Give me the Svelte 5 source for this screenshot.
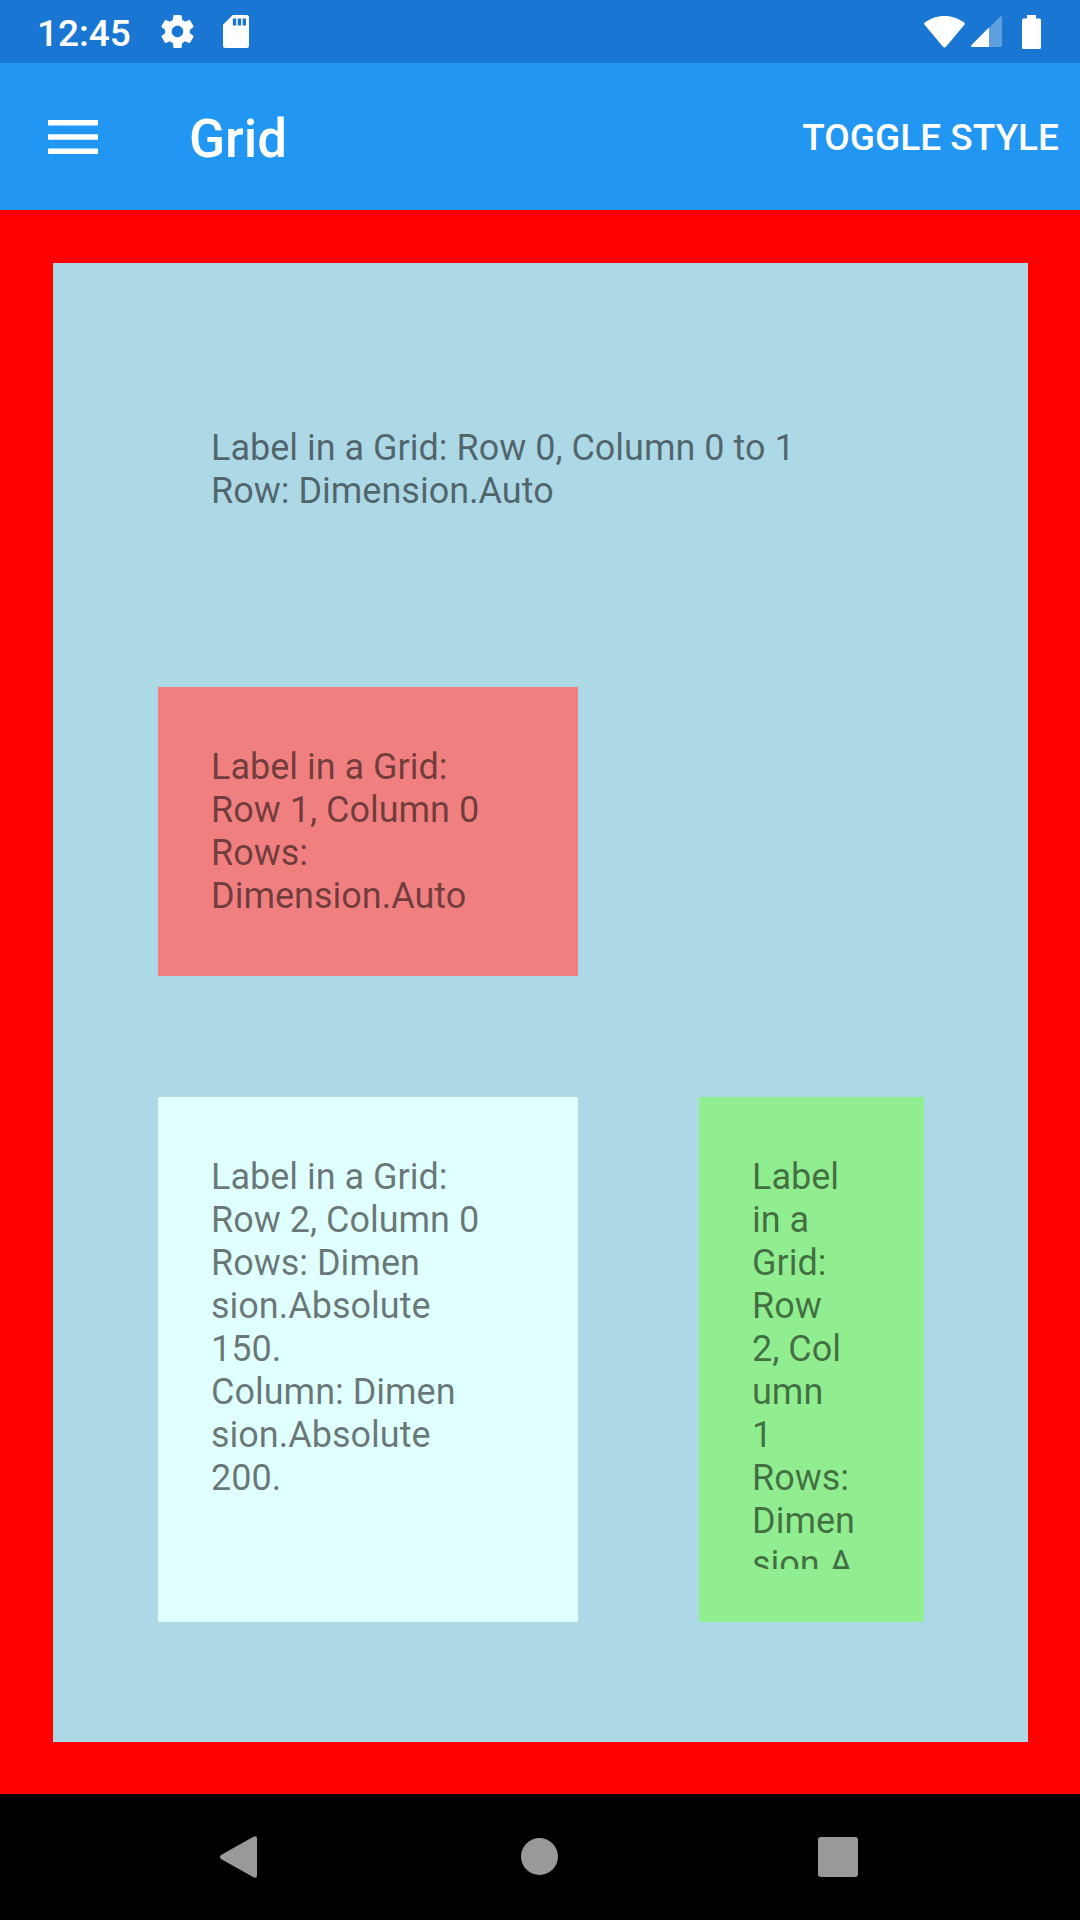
<script>
  let styled = $state(true);
</script>

<div class="screen">
  <div class="status">
    <time class="clock">12:45</time>
    <svg class="gear" viewBox="2 2 20 20" aria-hidden="true">
      <path d="M19.43 12.98c.04-.32.07-.64.07-.98s-.03-.66-.07-.98l2.11-1.65c.19-.15.24-.42.12-.64l-2-3.46c-.12-.22-.39-.3-.61-.22l-2.49 1c-.52-.4-1.08-.73-1.69-.98l-.38-2.65C14.46 2.18 14.25 2 14 2h-4c-.25 0-.46.18-.49.42l-.38 2.65c-.61.25-1.17.59-1.69.98l-2.49-1c-.23-.09-.49 0-.61.22l-2 3.46c-.13.22-.07.49.12.64l2.11 1.65c-.04.32-.07.65-.07.98s.03.66.07.98l-2.11 1.65c-.19.15-.24.42-.12.64l2 3.46c.12.22.39.3.61.22l2.49-1c.52.4 1.08.73 1.69.98l.38 2.65c.03.24.24.42.49.42h4c.25 0 .46-.18.49-.42l.38-2.65c.61-.25 1.17-.59 1.69-.98l2.49 1c.23.09.49 0 .61-.22l2-3.46c.12-.22.07-.49-.12-.64l-2.11-1.65zM12 15.5c-1.93 0-3.5-1.57-3.5-3.5s1.57-3.5 3.5-3.5 3.5 1.57 3.5 3.5-1.57 3.5-3.5 3.5z" />
    </svg>
    <svg class="card-icon" viewBox="0 0 26 33" aria-hidden="true">
      <path fill-rule="evenodd" d="M9.8 0H23.5a2.5 2.5 0 0 1 2.5 2.5V30.5a2.5 2.5 0 0 1-2.5 2.5H2.5A2.5 2.5 0 0 1 0 30.5V9.8ZM9.8 3.5v7h3.4v-7zm4.9 0v7h3.4v-7zm4.9 0v7h3.4v-7z" />
    </svg>
    <div class="signals">
      <svg class="wifi" viewBox="0 0 41 32" aria-hidden="true">
        <path d="M.6 8.7C-.1 7.9 0 7.2.8 6.6 6 2.6 13 0 20.5 0S35 2.6 40.2 6.6c.8.6.9 1.3.2 2.1L22 30.7c-.9 1.1-2.1 1.1-3 0Z" />
      </svg>
      <svg class="cell" viewBox="0 0 31 31" aria-hidden="true">
        <path opacity=".3" d="M18 12 29.3.6Q31-.5 31 1.5V29.5Q31 31 29.5 31H18Z" />
        <path d="M18 11.5V31H1.2Q-.7 30.8.5 29Z" />
      </svg>
      <svg class="battery" viewBox="0 0 19 34" aria-hidden="true">
        <path d="M5 0h9v3.5h3.5Q19 3.5 19 5v27.5Q19 34 17.5 34h-16Q0 34 0 32.5V5Q0 3.5 1.5 3.5H5Z" />
      </svg>
    </div>
  </div>

  <header class="bar">
    <button class="menu" type="button" aria-label="Open menu">
      <svg viewBox="0 0 50 34" aria-hidden="true">
        <path d="M0 0h50v5.6H0zM0 14.2h50v5.6H0zM0 28.4h50V34H0z" />
      </svg>
    </button>
    <h1>Grid</h1>
    <button class="toggle" type="button" onclick={() => (styled = !styled)}>TOGGLE STYLE</button>
  </header>

  <main class:styled>
    <div class="panel">
      <section class="cell-box wide"><p>Label in a Grid: Row 0, Column 0 to 1<br />Row: Dimension.Auto</p></section>
      <section class="cell-box coral"><p>Label in a Grid:<br />Row 1, Column 0<br />Rows:<br />Dimension.Auto</p></section>
      <section class="cell-box cyan"><p>Label in a Grid:<br />Row 2, Column 0<br />Rows: Dimen<br />sion.Absolute<br />150.<br />Column: Dimen<br />sion.Absolute<br />200.</p></section>
      <section class="cell-box green"><p>Label<br />in a<br />Grid:<br />Row<br />2, Col<br />umn<br />1<br />Rows:<br />Dimen<br />sion.A</p></section>
    </div>
  </main>

  <nav aria-label="System">
    <button type="button" aria-label="Back">
      <svg viewBox="0 0 48 48" aria-hidden="true">
        <path d="M5 22 37.5 3.7Q41 2 41 5.5V42.5Q41 46 37.5 44.3L5 26Q3 24 5 22Z" />
      </svg>
    </button>
    <button type="button" aria-label="Home">
      <svg viewBox="0 0 48 48" aria-hidden="true"><circle cx="23.5" cy="23.5" r="18.5" /></svg>
    </button>
    <button type="button" aria-label="Recent apps">
      <svg viewBox="0 0 48 48" aria-hidden="true"><rect x="2" y="4" width="40" height="40" rx="3" /></svg>
    </button>
  </nav>
</div>

<style>
  :global(body) {
    margin: 0;
  }
  .screen {
    display: flex;
    flex-direction: column;
    min-height: 100vh;
    font-family: Roboto, "Liberation Sans", sans-serif;
    font-size: 37px;
    line-height: 43px;
  }
  button {
    padding: 0;
    border: 0;
    background: none;
    color: inherit;
    font: inherit;
    cursor: pointer;
  }
  svg {
    display: block;
    flex: none;
    fill: currentColor;
  }
  .status {
    display: flex;
    align-items: center;
    box-sizing: border-box;
    height: 63px;
    padding: 0 39px 0 37px;
    background: #1976d2;
    color: #fff;
  }
  .clock {
    padding-top: 4px;
    font-weight: 500;
    margin-right: 30px;
  }
  .gear {
    width: 33px;
    height: 33px;
    margin-right: 29px;
  }
  .card-icon {
    width: 26px;
    height: 33px;
  }
  .signals {
    display: flex;
    align-items: center;
    margin-left: auto;
  }
  .wifi {
    width: 41px;
    height: 32px;
    margin-right: 6px;
  }
  .cell {
    width: 31px;
    height: 31px;
    margin-right: 20px;
  }
  .battery {
    width: 19px;
    height: 34px;
  }
  .bar {
    display: flex;
    align-items: center;
    height: 147px;
    padding: 0 21px 0 48px;
    background: #2196f3;
    color: #fff;
  }
  .menu svg {
    width: 50px;
    height: 34px;
  }
  h1 {
    flex: 1;
    margin: 0 0 0 91px;
    padding-top: 4px;
    font-size: 53px;
    line-height: 62px;
    font-weight: 500;
  }
  .toggle {
    padding-top: 2px;
    font-weight: 500;
    white-space: nowrap;
  }
  main {
    display: flex;
    flex: 1;
    padding: 53px 52px 52px 53px;
  }
  main.styled {
    background: #f00;
  }
  .panel {
    display: grid;
    flex: 1;
    grid-template-columns: 420px 1fr;
    grid-template-rows: auto auto 525px;
    align-content: start;
    gap: 121px;
    padding: 105px 104px 120px 105px;
    background: #add8e6;
  }
  .cell-box {
    box-sizing: border-box;
    min-width: 0;
    padding: 59px 53px 58px;
    color: rgba(0, 0, 0, 0.54);
    font-size: 36px;
  }
  .cell-box p {
    margin: 0;
    white-space: nowrap;
  }
  .wide {
    grid-column: 1 / -1;
    padding-bottom: 53px;
  }
  .coral {
    grid-column: 1;
    background: #f08080;
  }
  .cyan {
    grid-column: 1;
    background: #e0ffff;
  }
  .green {
    padding-bottom: 53px;
    background: #90ee90;
  }
  .green p {
    height: 100%;
    overflow: hidden;
  }
  nav {
    display: grid;
    grid-template-columns: repeat(3, 300px);
    justify-content: center;
    height: 126px;
    background: #000;
    color: #999;
  }
  nav button {
    display: grid;
    place-items: center;
  }
  nav svg {
    width: 48px;
    height: 48px;
  }
</style>
